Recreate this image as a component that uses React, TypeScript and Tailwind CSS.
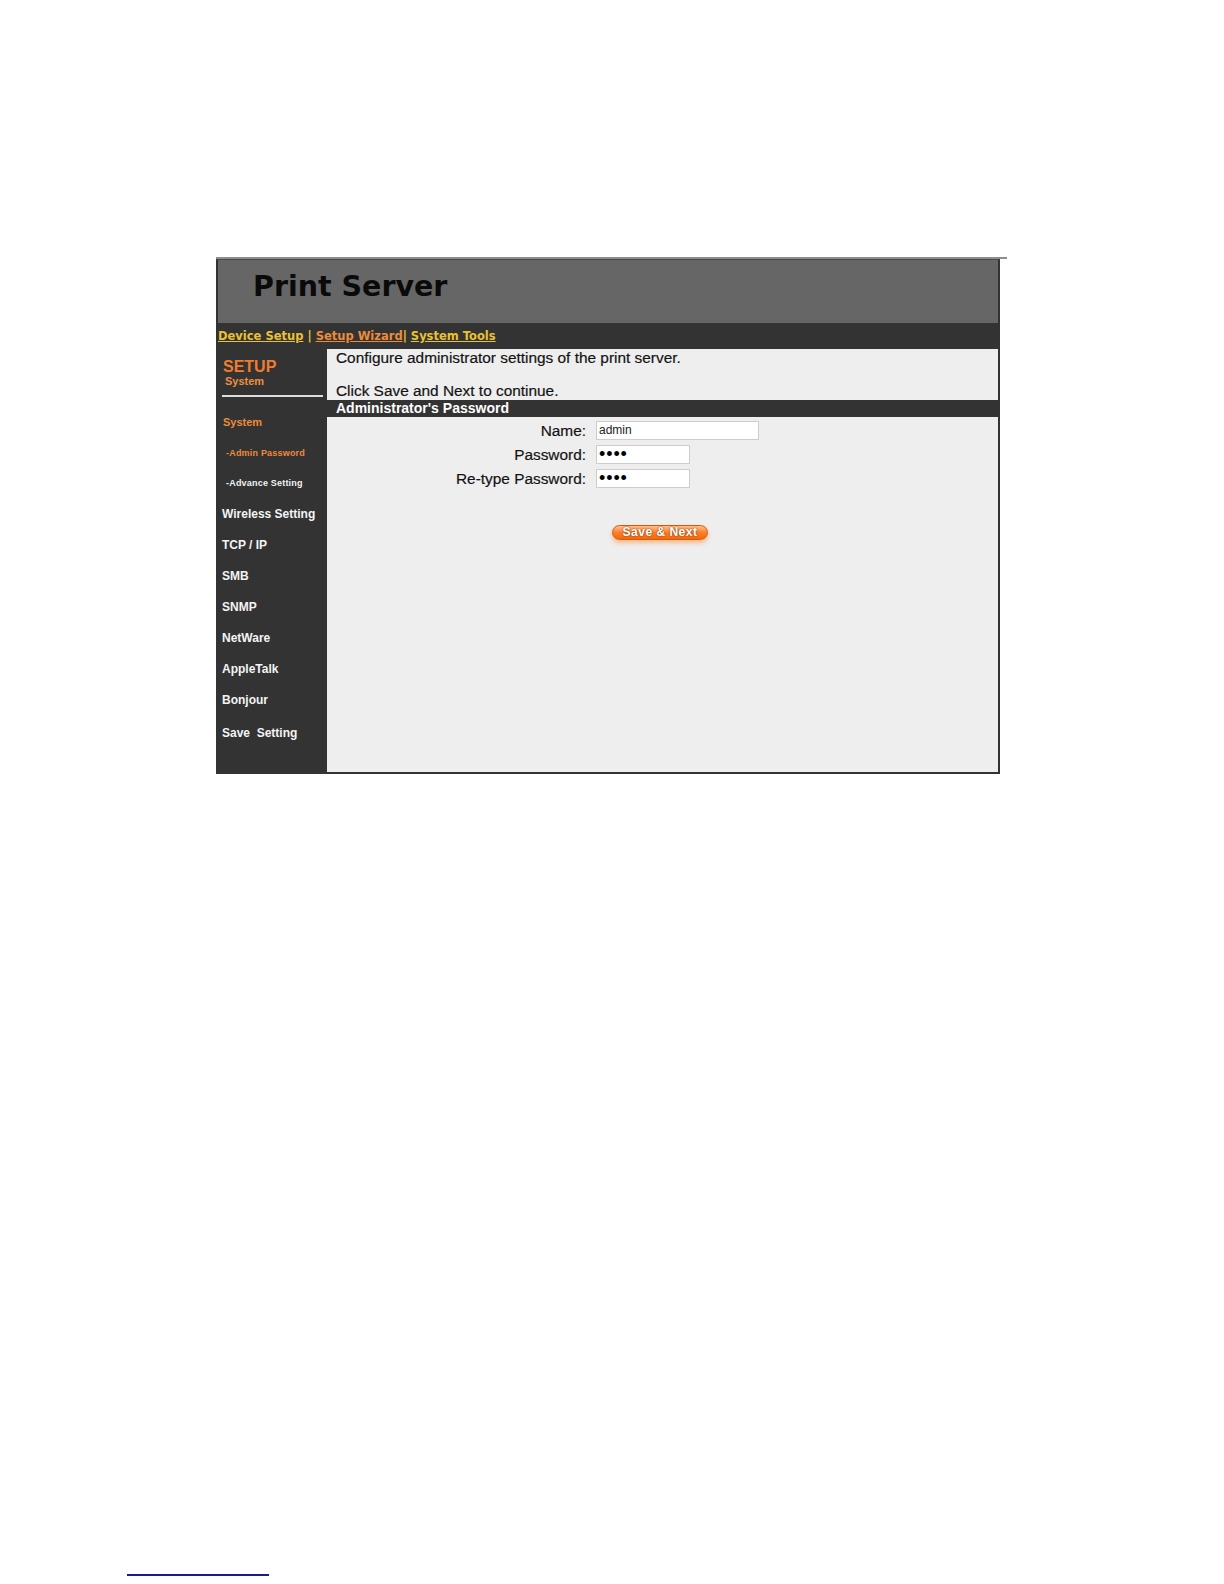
import React from "react";

const menu: { label: string; sub?: boolean; active?: boolean; cls?: string }[] = [
  { label: "System", active: true },
  { label: "-Admin Password", sub: true, active: true, cls: "h-[30px]" },
  { label: "-Advance Setting", sub: true },
  { label: "Wireless Setting" },
  { label: "TCP / IP" },
  { label: "SMB" },
  { label: "SNMP" },
  { label: "NetWare" },
  { label: "AppleTalk" },
  { label: "Bonjour" },
  { label: "Save\u00a0 Setting", cls: "mt-[2px]" },
];

function MenuItem({ label, sub, active, cls }: { label: string; sub?: boolean; active?: boolean; cls?: string }) {
  const extra = cls ? " " + cls : " h-[31px]";
  if (sub) {
    return (
      <div
        className={
          "leading-[31px] pl-[8px] text-[9px] font-bold tracking-[0.2px] whitespace-nowrap " +
          (active ? "text-[#ec8a3c]" : "text-[#f2f2f2]") +
          extra
        }
      >
        {label}
      </div>
    );
  }
  if (active) {
    return (
      <div className={"leading-[31px] pl-[5px] text-[11px] font-bold text-[#ec8a3c] whitespace-nowrap" + extra}>
        {label}
      </div>
    );
  }
  return (
    <div className={"h-[31px] leading-[31px] pl-[4px] text-[12px] font-bold text-[#f4f4f4] whitespace-nowrap" + (cls ? " " + cls : "")}>
      {label}
    </div>
  );
}

function Row({ label, children }: { label: string; children: React.ReactNode }) {
  return (
    <div className="flex items-center h-[19px]">
      <div className="w-[259px] text-right text-[15.4px] leading-[19px] text-[#111] [-webkit-text-stroke:0.2px_#222] whitespace-nowrap">
        {label}
      </div>
      <div className="ml-[10px]">{children}</div>
    </div>
  );
}

function Dots() {
  return (
    <span className="text-[18px] leading-[17px] tracking-[0.9px] text-black font-['Liberation_Sans',Arial,sans-serif]">
      ••••
    </span>
  );
}

export default function App() {
  return (
    <div className="w-[1224px] h-[1584px] bg-white overflow-hidden font-['Liberation_Sans',Arial,sans-serif]">
      <div className="pt-[257px] pl-[216px]">
        <div className="w-[791px] h-[2px] bg-[#8e8e8e]" />
        <div className="w-[784px] border-x-2 border-b-2 border-t border-[#333333] border-t-[#4a4a4a]">
          {/* Header */}
          <div className="h-[63px] bg-[#666666] pl-[35px] pt-[13px]">
            <div className="text-[28.5px] leading-[28px] font-bold text-[#0a0a0a] font-['DejaVu_Sans',Verdana,sans-serif]">
              Print Server
            </div>
          </div>
          {/* Nav */}
          <div className="h-[26px] bg-[#333333] leading-[27px] text-[11.5px] font-bold font-['DejaVu_Sans',Verdana,sans-serif] whitespace-pre">
            <span className="text-[#e8c232] underline underline-offset-[1px]">Device Setup</span>
            <span className="text-[#e8c232]"> | </span>
            <span className="text-[#ea8d3c] underline underline-offset-[1px]">Setup Wizard</span>
            <span className="text-[#e8c232]">| </span>
            <span className="text-[#e8c232] underline underline-offset-[1px]">System Tools</span>
          </div>
          {/* Body */}
          <div className="flex h-[423px]">
            <div className="w-[109px] shrink-0 bg-[#333333]">
              <div className="pt-[9px] pl-[5px]">
                <div className="text-[16px] leading-[17px] font-bold text-[#f07c2e]">SETUP</div>
                <div className="text-[11px] leading-[13px] font-bold text-[#ec8f3e] pl-[2px]">System</div>
              </div>
              <div className="mt-[7px] ml-[4px] w-[101px] h-[2px] bg-[#dcdcdc]" />
              <div className="mt-[10px]">
                {menu.map((m) => (
                  <MenuItem key={m.label} {...m} />
                ))}
              </div>
            </div>
            <div className="flex-1 bg-[#eeeeee]">
              <div className="h-[51px] pl-[9px] pt-[1px] text-[15.4px] leading-[16.5px] text-[#111] [-webkit-text-stroke:0.2px_#222]">
                Configure administrator settings of the print server.
                <br />
                <br />
                Click Save and Next to continue.
              </div>
              <div className="h-[17px] bg-[#333333] pl-[9px] text-[14px] leading-[17px] font-bold text-white">
                Administrator&apos;s Password
              </div>
              <div className="pt-[4px] flex flex-col gap-[5px]">
                <Row label="Name:">
                  <div className="w-[163px] h-[19px] bg-white border border-[#cdcdcd] pl-[2px] text-[12px] leading-[17px] text-[#222]">
                    admin
                  </div>
                </Row>
                <Row label="Password:">
                  <div className="w-[94px] h-[19px] bg-white border border-[#cdcdcd] pl-[2px] flex items-center">
                    <Dots />
                  </div>
                </Row>
                <Row label="Re-type Password:">
                  <div className="w-[94px] h-[19px] bg-white border border-[#cdcdcd] pl-[2px] flex items-center">
                    <Dots />
                  </div>
                </Row>
              </div>
              <div className="mt-[37px] pl-[285px]">
                <div className="w-[96px] h-[15px] rounded-full border border-[#d45a08] bg-linear-to-b from-[#ffc08e] via-[#ff7d22] to-[#f26a0c] shadow-[0_3px_4px_rgba(255,120,20,0.45)] flex items-center justify-center text-[12px] leading-[13px] font-bold text-white tracking-[0.5px] [text-shadow:0_0_2px_#6a2800]">
                  Save &amp; Next
                </div>
              </div>
            </div>
          </div>
        </div>
      </div>
      <div className="mt-[800px] pl-[127px]">
        <div className="w-[142px] h-[1.5px] bg-[#1b1b8f]" />
      </div>
    </div>
  );
}
